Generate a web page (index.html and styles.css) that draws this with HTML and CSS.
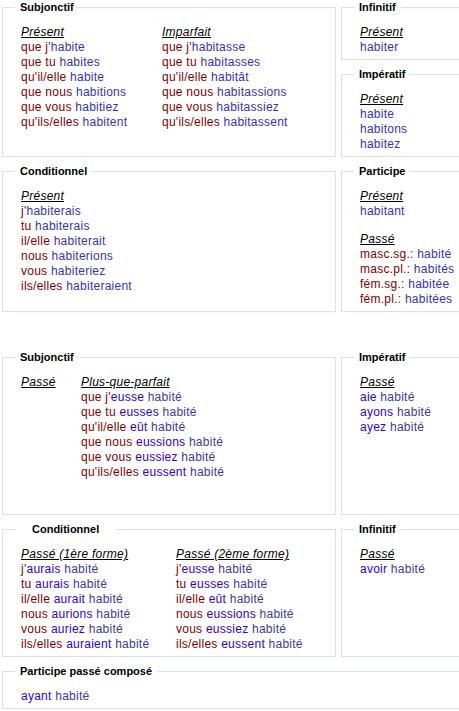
FILE: index.html
```html
<!DOCTYPE html>
<html lang="fr">
<head>
<meta charset="utf-8">
<title>habiter</title>
<link rel="stylesheet" href="styles.css">
</head>
<body>
<div class="group">
  <fieldset class="box rows2">
    <legend class="tight">Subjonctif</legend>
    <div class="body cols c141">
      <div>
        <div class="h">Présent</div>
        <div><span class="p">que j'</span><span class="v">habite</span></div>
        <div><span class="p">que tu </span><span class="v">habites</span></div>
        <div><span class="p">qu'il/elle </span><span class="v">habite</span></div>
        <div><span class="p">que nous </span><span class="v">habitions</span></div>
        <div><span class="p">que vous </span><span class="v">habitiez</span></div>
        <div><span class="p">qu'ils/elles </span><span class="v">habitent</span></div>
      </div>
      <div>
        <div class="h">Imparfait</div>
        <div><span class="p">que j'</span><span class="v">habitasse</span></div>
        <div><span class="p">que tu </span><span class="v">habitasses</span></div>
        <div><span class="p">qu'il/elle </span><span class="v">habitât</span></div>
        <div><span class="p">que nous </span><span class="v">habitassions</span></div>
        <div><span class="p">que vous </span><span class="v">habitassiez</span></div>
        <div><span class="p">qu'ils/elles </span><span class="v">habitassent</span></div>
      </div>
    </div>
  </fieldset>
  <fieldset class="box">
    <legend>Infinitif</legend>
    <div class="body">
      <div class="h">Présent</div>
      <div class="v">habiter</div>
    </div>
  </fieldset>
  <fieldset class="box">
    <legend>Impératif</legend>
    <div class="body">
      <div class="h">Présent</div>
      <div class="v">habite</div>
      <div class="v">habitons</div>
      <div class="v">habitez</div>
    </div>
  </fieldset>
  <fieldset class="box">
    <legend>Conditionnel</legend>
    <div class="body">
      <div class="h">Présent</div>
      <div><span class="p">j'</span><span class="v">habiterais</span></div>
      <div><span class="p">tu </span><span class="v">habiterais</span></div>
      <div><span class="p">il/elle </span><span class="v">habiterait</span></div>
      <div><span class="p">nous </span><span class="v">habiterions</span></div>
      <div><span class="p">vous </span><span class="v">habiteriez</span></div>
      <div><span class="p">ils/elles </span><span class="v">habiteraient</span></div>
    </div>
  </fieldset>
  <fieldset class="box">
    <legend>Participe</legend>
    <div class="body">
      <div class="h">Présent</div>
      <div class="v">habitant</div>
      <div class="h gap">Passé</div>
      <div><span class="p">masc.sg.: </span><span class="v">habité</span></div>
      <div><span class="p">masc.pl.: </span><span class="v">habités</span></div>
      <div><span class="p">fém.sg.: </span><span class="v">habitée</span></div>
      <div><span class="p">fém.pl.: </span><span class="v">habitées</span></div>
    </div>
  </fieldset>
</div>

<div class="group second">
  <fieldset class="box">
    <legend class="tight">Subjonctif</legend>
    <div class="body cols c60 tall">
      <div>
        <div class="h">Passé</div>
      </div>
      <div>
        <div class="h">Plus-que-parfait</div>
        <div><span class="p">que j'</span><span class="a">eusse</span> <span class="pp">habité</span></div>
        <div><span class="p">que tu </span><span class="a">eusses</span> <span class="pp">habité</span></div>
        <div><span class="p">qu'il/elle </span><span class="a">eût</span> <span class="pp">habité</span></div>
        <div><span class="p">que nous </span><span class="a">eussions</span> <span class="pp">habité</span></div>
        <div><span class="p">que vous </span><span class="a">eussiez</span> <span class="pp">habité</span></div>
        <div><span class="p">qu'ils/elles </span><span class="a">eussent</span> <span class="pp">habité</span></div>
      </div>
    </div>
  </fieldset>
  <fieldset class="box">
    <legend>Impératif</legend>
    <div class="body">
      <div class="h">Passé</div>
      <div><span class="a">aie</span> <span class="pp">habité</span></div>
      <div><span class="a">ayons</span> <span class="pp">habité</span></div>
      <div><span class="a">ayez</span> <span class="pp">habité</span></div>
    </div>
  </fieldset>
  <fieldset class="box">
    <legend class="wide">Conditionnel</legend>
    <div class="body cols c155">
      <div>
        <div class="h">Passé (1ère forme)</div>
        <div><span class="p">j'</span><span class="a">aurais</span> <span class="pp">habité</span></div>
        <div><span class="p">tu </span><span class="a">aurais</span> <span class="pp">habité</span></div>
        <div><span class="p">il/elle </span><span class="a">aurait</span> <span class="pp">habité</span></div>
        <div><span class="p">nous </span><span class="a">aurions</span> <span class="pp">habité</span></div>
        <div><span class="p">vous </span><span class="a">auriez</span> <span class="pp">habité</span></div>
        <div><span class="p">ils/elles </span><span class="a">auraient</span> <span class="pp">habité</span></div>
      </div>
      <div>
        <div class="h">Passé (2ème forme)</div>
        <div><span class="p">j'</span><span class="a">eusse</span> <span class="pp">habité</span></div>
        <div><span class="p">tu </span><span class="a">eusses</span> <span class="pp">habité</span></div>
        <div><span class="p">il/elle </span><span class="a">eût</span> <span class="pp">habité</span></div>
        <div><span class="p">nous </span><span class="a">eussions</span> <span class="pp">habité</span></div>
        <div><span class="p">vous </span><span class="a">eussiez</span> <span class="pp">habité</span></div>
        <div><span class="p">ils/elles </span><span class="a">eussent</span> <span class="pp">habité</span></div>
      </div>
    </div>
  </fieldset>
  <fieldset class="box">
    <legend>Infinitif</legend>
    <div class="body">
      <div class="h">Passé</div>
      <div><span class="a">avoir</span> <span class="pp">habité</span></div>
    </div>
  </fieldset>
  <fieldset class="box full">
    <legend>Participe passé composé</legend>
    <div class="body">
      <div><span class="a">ayant</span> <span class="pp">habité</span></div>
    </div>
  </fieldset>
</div>
</body>
</html>
```

FILE: styles.css
```css
html, body {
  margin: 0;
  padding: 0;
  overflow: hidden;
  background: #ffffff;
}

body {
  padding-left: 2px;
  font-family: "Liberation Sans", Arial, sans-serif;
  font-size: 12px;
  line-height: 15px;
  letter-spacing: 0.25px;
  white-space: nowrap;
  color: #000000;
}

.group {
  display: grid;
  grid-template-columns: 334px 150px;
  column-gap: 5px;
  row-gap: 7px;
  width: 489px;
}

.group.second {
  margin-top: 38px;
}

.box {
  margin: 0;
  padding: 0;
  min-width: 0;
  border: 1px solid #d9dff1;
}

.box legend {
  margin-left: 12px;
  padding: 0 5px;
  font-size: 11px;
  line-height: 14px;
  font-weight: bold;
  letter-spacing: 0;
  color: #000000;
}

.box legend.tight {
  padding-right: 2px;
}

.box legend.wide {
  padding: 0 17px;
}

.rows2 {
  grid-row: span 2;
}

.full {
  grid-column: 1 / span 2;
}

.body {
  padding: 11px 18px 4px;
}

.body.tall {
  padding-bottom: 34px;
}

.cols {
  display: grid;
}

.c141 { grid-template-columns: 141px auto; }
.c60 { grid-template-columns: 60px auto; }
.c155 { grid-template-columns: 155px auto; }

.h {
  font-style: italic;
  text-decoration: underline;
  color: #000000;
}

.gap {
  margin-top: 13px;
}

.p { color: #800000; }
.v { color: #3333bb; }
.a { color: #2a00ee; }
.pp { color: #3a3a9e; }
```
